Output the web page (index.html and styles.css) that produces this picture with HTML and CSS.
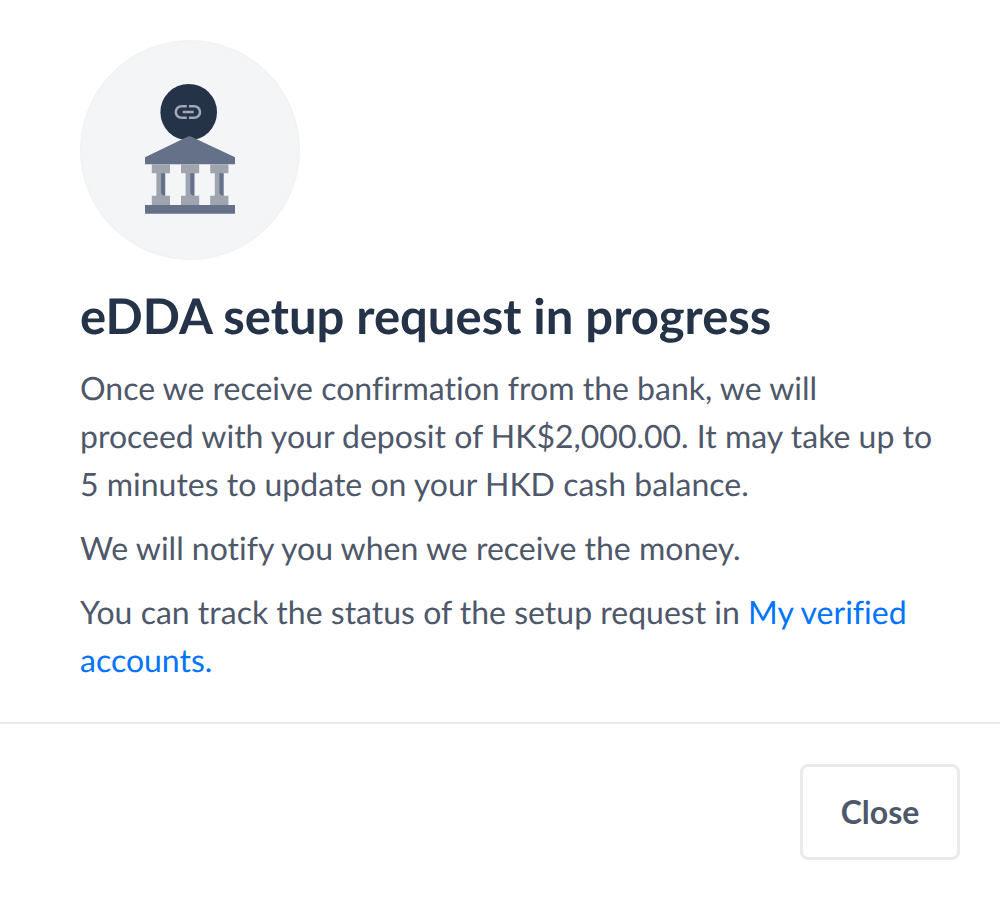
FILE: index.html
```html
<!DOCTYPE html>
<html lang="en">
<head>
<meta charset="utf-8">
<meta name="viewport" content="width=device-width, initial-scale=1">
<title>eDDA setup request in progress</title>
<link rel="stylesheet" href="styles.css">
</head>
<body>
<main class="dialog">
  <section class="content">
    <div class="badge">
      <svg class="badge-icon" viewBox="0 0 216 216" aria-hidden="true">
        <defs>
          <g id="column">
            <path fill="#9fa4ae" d="M0 0h18.2v9h-4.6v22.4h4.6v9.4H0v-9.4h4.6V9H0z"/>
            <path fill="#647189" d="M9.2 9h4v22.4c-2.4 0-4-1.4-4-3.6z"/>
          </g>
        </defs>
        <g transform="translate(-2 -2)">
          <circle cx="108.7" cy="72.2" r="28.3" fill="#253349"/>
          <g fill="none" stroke="#a1a8b7" stroke-width="2.6">
            <path d="M106.8 66.2h-5.2a5.8 5.8 0 0 0 0 11.6h5.2M109 66.2h5.2a5.8 5.8 0 0 1 0 11.6h-5.2M102.7 72h11"/>
          </g>
          <path fill="#647189" d="M65 117.3l42-20.3q2.5-1.5 5 0l43 20.3v7H65z"/>
          <use href="#column" x="71.8" y="124.3"/>
          <use href="#column" x="101" y="124.3"/>
          <use href="#column" x="130.2" y="124.3"/>
          <path fill="#647189" d="M65 165h90v8.8H65z"/>
        </g>
      </svg>
    </div>
    <h1 class="title">eDDA setup request in progress</h1>
    <div class="message">
      <p class="text">Once we receive confirmation from the bank, we will proceed with your deposit of HK$2,000.00. It may take up to 5 minutes to update on your HKD cash balance.</p>
      <p class="text">We will notify you when we receive the money.</p>
      <p class="text">You can track the status of the setup request in <a class="link" href="#accounts">My verified accounts.</a></p>
    </div>
  </section>
  <footer class="actions">
    <button class="close" type="button">Close</button>
  </footer>
</main>
</body>
</html>
```
FILE: styles.css
```css
* {
  box-sizing: border-box;
}

body {
  margin: 0;
  background: #fff;
  color: #4e586a;
  font-family: Lato, "Liberation Sans", sans-serif;
  font-size: 32px;
  line-height: 48px;
  font-variant-ligatures: none;
  text-rendering: geometricPrecision;
}

.content {
  padding: 40px 64px 38px 80px;
}

.badge {
  width: 220px;
  height: 220px;
  border: 2px solid #f1f3f4;
  border-radius: 50%;
  background: #f3f5f7;
}

.badge-icon {
  display: block;
  width: 100%;
  height: 100%;
}

.title {
  margin: 24px 0 16px;
  color: #253349;
  font-size: 49px;
  font-weight: 700;
  line-height: 64px;
}

.message {
  display: flex;
  flex-direction: column;
  gap: 16px;
}

.text {
  margin: 0;
}

.link {
  color: #0074ff;
  text-decoration: none;
}

.actions {
  display: flex;
  justify-content: flex-end;
  padding: 40px;
  border-top: 2px solid #e9eaee;
}

.close {
  min-width: 160px;
  padding: 21px 32px;
  border: 3px solid #e9eaee;
  border-radius: 8px;
  background: #fff;
  color: #4e586a;
  font: inherit;
  font-weight: 700;
  cursor: pointer;
}
```
